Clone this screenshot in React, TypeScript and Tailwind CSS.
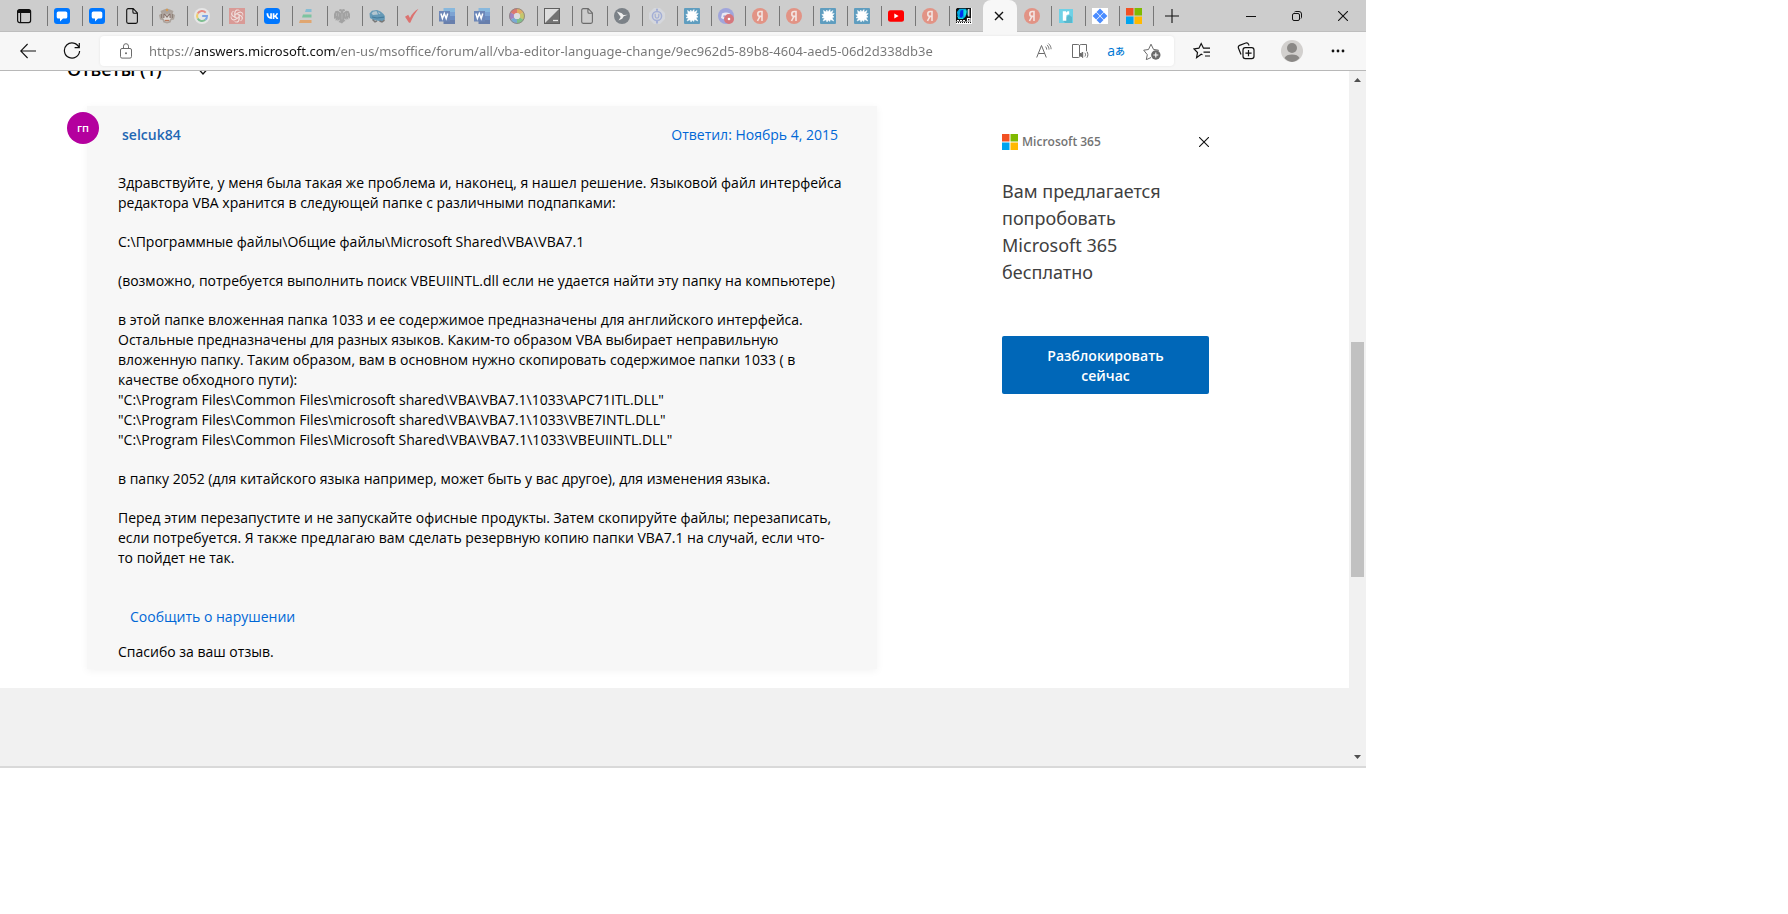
import type { ReactNode } from "react";

const uiFont = "font-['Open_Sans','Noto_Sans',sans-serif]";
const wideFont = "font-['Noto_Sans','Open_Sans',sans-serif]";

function Icon({ children, label }: { children: ReactNode; label?: string }) {
  return (
    <svg width="16" height="16" viewBox="0 0 16 16" fill="none" role="img" aria-label={label} className="block shrink-0">
      {children}
    </svg>
  );
}

const ChatIcon = () => (
  <Icon label="Chat">
    <rect width="16" height="16" rx="3" fill="#0077ff" />
    <path d="M4.4 3.4h7.2a1.700 1.700 0 0 1 1.700 1.700v3.800a1.700 1.700 0 0 1-1.700 1.700H9L6 13.400v-2.800H4.400a1.700 1.700 0 0 1-1.700-1.700V5.100a1.700 1.700 0 0 1 1.700-1.700z" fill="#fff" />
  </Icon>
);

const PageIcon = ({ color }: { color: string }) => (
  <Icon label="Page">
    <path d="M2.7 2.2C2.7 1.2 3.3.6 4.2.6h5l4.2 4.3v8.9c0 1-.6 1.6-1.5 1.6H4.2c-.9 0-1.5-.6-1.5-1.6zM8.9.8v3.1c0 .9.5 1.3 1.3 1.3h3" stroke={color} strokeWidth="1.1" />
  </Icon>
);

const EmblemIcon = () => (
  <Icon label="Emblem">
    <path d="M1.500 3L5 1.500 8 .5l3 1L14.500 3l-1 2.500L16 7l-1 4.500-2.500.5-1 2.500L8 15.500l-3.500-1-1-2.500L1 11.500 0 7l2.500-1.500z" fill="#aca39c" />
    <path d="M4.800 4.500L8 7l3.200-2.500.8 5.500-2.500 3.500h-3L4 10z" fill="#dedad6" />
    <path d="M5 5.500L4.800 10M5.200 5.500L8 9l2.800-3.500M11 5.500l.2 4.500" stroke="#85716a" strokeWidth="1.200" />
    <path d="M6 12.500h4" stroke="#b9785c" strokeWidth="1.300" />
    <path d="M2.500 6v4M13.500 6v4" stroke="#8d8078" />
    <circle cx="8" cy="2" r="1.200" fill="#d69a52" />
  </Icon>
);

const GoogleIcon = () => (
  <Icon label="Google">
    <circle cx="8" cy="8" r="8" fill="#e6e6e6" />
    <path d="M11.700 4.600A5 5 0 0 0 3.700 5.600" stroke="#e88a82" strokeWidth="2" />
    <path d="M3.700 5.600a5 5 0 0 0 0 4.800" stroke="#f0cf6c" strokeWidth="2" />
    <path d="M3.700 10.400a5 5 0 0 0 7.600 1.400" stroke="#7fbf91" strokeWidth="2" />
    <path d="M11.300 11.800C12.500 10.800 13 9.500 13 8H8.200" stroke="#7fa5e6" strokeWidth="2" />
  </Icon>
);

const KnotIcon = () => (
  <Icon label="ChatGPT">
    <rect width="16" height="16" fill="#d99a96" />
    <g stroke="#efdcda" strokeWidth=".9">
      {[0, 60, 120, 180, 240, 300].map((a) => (
        <path key={a} transform={`rotate(${a} 8 8)`} d="M5.900 9.200V4.600A2.700 2.700 0 0 1 10.500 2.700M5.900 6.800L9.900 4.500a2.700 2.700 0 0 1 3.400.6" />
      ))}
    </g>
  </Icon>
);

const VkIcon = () => (
  <Icon label="VK">
    <rect width="16" height="16" rx="3.500" fill="#0077ff" />
    <path d="M2.500 5.200h1.800c.1 2.400 1 3.400 1.900 3.700V5.200h1.700v5.700C4.500 11 2.600 8.800 2.500 5.200zM8.700 5.200h1.700v2.200c1-.2 1.600-1 2-2.200H14c-.3 1.300-1 2.200-1.900 2.700 1 .5 1.700 1.500 2.200 3h-1.900c-.3-1-1-1.800-2-2v2H8.700z" fill="#fff" />
  </Icon>
);

const BarsIcon = () => (
  <Icon label="Bars">
    <path d="M7 1h5.500v3H6z" fill="#86bdd4" />
    <path d="M4 6.500h8.500V9.500H3z" fill="#7cc4a0" />
    <path d="M1 12h11.500v3H0z" fill="#e0a670" />
  </Icon>
);

const EagleIcon = () => (
  <Icon label="Eagle">
    <path d="M6.700 3.200L5 3l.4-1.800L7.400 1 8 2.500 8.600 1l2 .2L11 3l-1.700.2V5L12 2.800 14.500 3 16 6v5l-1.500-2-.3 3-1.500-1.800-.4 2-1.500-1.700-.8.500 1.500 2-1.500.5L8 15.600 6 14.500 4.500 14 6 12l-.8-.5-1.500 1.700-.4-2L1.800 13l-.3-3L0 11V6l1.500-3L4 2.800 6.700 5z" fill="#a2a2a2" />
    <path d="M2.500 5v3M4.500 5.500v3M11.500 5.500v3M13.500 5v3M8 5.500v6" stroke="#b8b8b8" strokeWidth=".8" />
  </Icon>
);

const CarIcon = () => (
  <Icon label="Car">
    <path d="M.5 5.500L3 2.800l5-.8 3.500 1.500L14.500 6l1.300 2v3.500l-2.500 1.800-3.300-.3-5.500-1L1 10z" fill="#6599b6" />
    <path d="M2.500 5.500l1.500-1.800 3.500-.6L9 6.500 4 7zM9 3.500l2.500 2-1.500.8z" fill="#b4c6d0" />
    <path d="M3 9l5 1 7-.8" stroke="#457c9c" strokeWidth="1.200" />
    <path d="M3.500 11.500L6 13.800l2-1M10.500 13l2.500 1 2.500-1.800" stroke="#777" strokeWidth="1.500" />
  </Icon>
);

const CheckIcon = () => (
  <Icon label="Check">
    <path d="M1 8.800l3.200-2L6 9.900C7.800 6 10.600 2.900 14.500.8 11.200 4.900 8.500 9.500 6.300 14.800H5z" fill="#dc7370" />
  </Icon>
);

const WordIcon = () => (
  <Icon label="Word">
    <path d="M4.500 0H16v4H4.500z" fill="#88b8dd" />
    <path d="M4.500 4H16v4H4.500z" fill="#7da3d3" />
    <path d="M4.500 8H16v4H4.500z" fill="#6a8cc2" />
    <path d="M4.500 12H16v4H4.500z" fill="#687fac" />
    <rect y="3" width="11" height="10.500" fill="#6d87b8" />
    <path d="M1.900 5.500l1.500 5 1.900-5 1.900 5 1.500-5" stroke="#fff" strokeWidth="1.500" />
  </Icon>
);

const WheelIcon = () => (
  <Icon label="Colour wheel">
    <g strokeWidth="4.600">
      <path d="M8 2.600A5.400 5.400 0 0 1 12.700 5.300" stroke="#e0ae64" />
      <path d="M12.700 5.300a5.400 5.400 0 0 1 0 5.400" stroke="#c5c76a" />
      <path d="M12.700 10.700A5.400 5.400 0 0 1 8 13.400" stroke="#7fc08a" />
      <path d="M8 13.400a5.400 5.400 0 0 1-4.700-2.700" stroke="#7aa9d2" />
      <path d="M3.300 10.700a5.400 5.400 0 0 1 0-5.400" stroke="#a382c0" />
      <path d="M3.300 5.300A5.400 5.400 0 0 1 8 2.600" stroke="#db7870" />
    </g>
    <circle cx="8" cy="8" r="3.100" fill="#ddd" />
    <circle cx="8" cy="8" r="7.500" stroke="#8d8581" strokeWidth=".9" />
  </Icon>
);

const ExposureIcon = () => (
  <Icon label="Exposure">
    <rect x=".5" y=".5" width="15" height="15" fill="#737373" stroke="#5f5f5f" />
    <path d="M1 1h14L1 15z" fill="#dedede" />
    <path d="M9 12.500h5" stroke="#e8e8e8" strokeWidth="1.300" />
  </Icon>
);

const BirdIcon = () => (
  <Icon label="Bird">
    <circle cx="8" cy="8" r="8" fill="#7b8187" />
    <path d="M2.800 3.500l5 1.700L9.500 7l4.200-.2-4 1.500-1.500 2.500-3.700 1.700L6.700 9z" fill="#eee" />
  </Icon>
);

const UnitIcon = () => (
  <Icon label="Unit">
    <path d="M5 0h6l5 5v6l-5 5H5l-5-5V5z" fill="#d5d7dc" />
    <path d="M8 .8v2M8 13v2.500" stroke="#a4afd6" strokeWidth="2" />
    <circle cx="8" cy="8" r="4.600" stroke="#a4afd6" strokeWidth="1.500" />
    <path d="M6.200 5.800v2.500a1.800 1.800 0 0 0 3.600 0V5.800" stroke="#a4afd6" strokeWidth="1.200" />
  </Icon>
);

const SplatIcon = () => (
  <Icon label="Splat">
    <rect width="16" height="16" rx="1" fill="#5f9dbf" />
    <path d="M3.500 2.500L6 4l.7-2L8 3.800 10 1.500l.2 2.800L13 2.500l-1.300 3.200 2.500-.2-1.700 2L14 9l-2 .8 1.800 3.200-3.300-1.500-.8 2L8.300 12 7 14l-.9-2.300L3 13l1.500-3L2 9.800l1.700-1.600L1.800 6.500 4.200 6z" fill="#fff" stroke="#fff" strokeWidth=".5" strokeLinejoin="round" />
  </Icon>
);

const DiscordIcon = () => (
  <Icon label="Discord">
    <circle cx="8" cy="8" r="8" fill="#a0a5dc" />
    <path d="M4 5.500c2.500-1.300 5.500-1.300 8 0l1 4.500-2.500 1.300-1-1.300h-3l-1 1.300L3 10z" fill="#e9e9f3" />
    <circle cx="6.200" cy="8.200" r="1" fill="#a0a5dc" />
    <circle cx="11" cy="11" r="5" fill="#d6777d" />
    <circle cx="11" cy="11" r="1.300" fill="#fff" />
  </Icon>
);

const YandexIcon = () => (
  <Icon label="Yandex">
    <circle cx="8" cy="8" r="8" fill="#e29385" />
    <path d="M10 13V3.500H8.300C6.600 3.500 5.800 4.700 5.800 6c0 1.400.8 2.400 2.300 2.400H10M7.900 8.400L5.500 13" stroke="#f3e4e1" strokeWidth="1.600" />
  </Icon>
);

const YoutubeIcon = () => (
  <Icon label="YouTube">
    <rect y="2.200" width="16" height="11.600" rx="2.500" fill="#f00" />
    <path d="M6.300 5.600v4.800L10.600 8z" fill="#fff" />
  </Icon>
);

const ScreenIcon = () => (
  <Icon label="Computer">
    <rect width="16" height="16" fill="#fff" />
    <path d="M1 0h14v13.500H0V1z" fill="#111" />
    <path d="M1 4L3.500.7H10l1 3-1.500 5L7 11H2z" fill="#00a8e0" />
    <path d="M4.500 2.500L7 2v6l-2 2-1.500-2z" fill="#0030f0" />
    <path d="M8.200 1.500l1.800 1v4L8.200 9z" fill="#18e6e0" />
    <path d="M1.500 8.500l2 2H7" stroke="#20e0d8" />
    <path d="M12.800 1v7.500M11.500 10.500h2.500v2.500h-2.500z" stroke="#fff" strokeWidth="1.200" />
    <path d="M1 12.500h8" stroke="#fff" strokeDasharray="2 1" />
    <path d="M11.300 1.500v6" stroke="#2cc" strokeWidth=".8" />
    <path d="M0 14.500h15" stroke="#111" strokeDasharray="1 1" />
  </Icon>
);

const LetterIcon = () => (
  <Icon label="Reader">
    <path d="M1 1h14v14H1z" fill="#6fd1e6" />
    <path d="M11 7l3 2v6H7l-2-2.500z" fill="#59b9ce" />
    <path d="M4.800 3.200H8v1.500c.8-1.200 1.700-1.600 3.200-1.500v3.300C9 6.300 8.300 7 8.300 8.500v4.200H4.800z" fill="#fff" />
  </Icon>
);

const DiamondIcon = () => (
  <Icon label="Diamonds">
    <rect width="16" height="16" fill="#fff" />
    <path d="M8 .6l3.500 3.500L8 7.600 4.500 4.100zM8 8.400l3.500 3.500L8 15.400l-3.500-3.500zM4.100 4.500L7.600 8l-3.500 3.500L.6 8zM11.900 4.500L15.400 8l-3.500 3.500L8.400 8z" fill="#4a8cff" />
  </Icon>
);

const MicrosoftIcon = () => (
  <Icon label="Microsoft">
    <path d="M0 0h7.500v7.500H0z" fill="#f25022" />
    <path d="M8.500 0H16v7.500H8.500z" fill="#7fba00" />
    <path d="M0 8.500h7.500V16H0z" fill="#00a4ef" />
    <path d="M8.500 8.500H16V16H8.500z" fill="#ffb900" />
  </Icon>
);

const wideTabs: ReactNode[] = [
  <ChatIcon />, <ChatIcon />, <PageIcon color="#111" />, <EmblemIcon />, <GoogleIcon />, <KnotIcon />,
  <VkIcon />, <BarsIcon />, <EagleIcon />, <CarIcon />, <CheckIcon />, <WordIcon />, <WordIcon />,
  <WheelIcon />, <ExposureIcon />, <PageIcon color="#6b6b6b" />, <BirdIcon />, <UnitIcon />,
];
const narrowTabs: ReactNode[] = [
  <SplatIcon />, <DiscordIcon />, <YandexIcon />, <YandexIcon />, <SplatIcon />, <SplatIcon />,
  <YoutubeIcon />, <YandexIcon />, <ScreenIcon />,
];
const lastTabs: ReactNode[] = [<LetterIcon />, <DiamondIcon />, <MicrosoftIcon />];

function Tab({ icon, width, divider = true }: { icon: ReactNode; width: string; divider?: boolean }) {
  return (
    <button type="button" className={`flex h-5 shrink-0 items-center border-l pl-1.5 ${width} ${divider ? "border-[#777]" : "border-transparent"}`}>
      {icon}
    </button>
  );
}

function TabStrip() {
  return (
    <header className="flex h-8 items-center border-b border-[#bebebe] bg-[#cdcdcd]">
      <button type="button" aria-label="Tab actions" className="flex w-[47px] shrink-0 justify-center">
        <Icon>
          <rect x="1.600" y="1.600" width="13" height="13" rx="2" stroke="#111" strokeWidth="1.200" />
          <path d="M1.500 3.600a2 2 0 0 1 2-2h9a2 2 0 0 1 2 2V5h-13z" fill="#111" />
          <path d="M4.600 5v9.500" stroke="#111" strokeWidth="1.100" />
        </Icon>
      </button>
      {wideTabs.map((icon, i) => <Tab key={i} icon={icon} width="w-[35px]" />)}
      {narrowTabs.map((icon, i) => <Tab key={i} icon={icon} width="w-[34px]" />)}
      <div className="-mb-px flex h-8 w-[34px] shrink-0 items-center justify-center rounded-t-lg bg-[#f7f7f7] pr-0.5">
        <button type="button" aria-label="Close tab" className="flex">
          <svg width="10" height="10" viewBox="0 0 10 10"><path d="M1 1l8 8M9 1L1 9" stroke="#111" strokeWidth="1.400" /></svg>
        </button>
      </div>
      <Tab icon={<YandexIcon />} width="w-[34px]" divider={false} />
      {lastTabs.map((icon, i) => <Tab key={i} icon={icon} width="w-[34px]" />)}
      <button type="button" aria-label="New tab" className="flex h-5 w-9 shrink-0 items-center justify-center border-l border-[#777]">
        <svg width="14" height="14" viewBox="0 0 14 14"><path d="M7 0v14M0 7h14" stroke="#111" strokeWidth="1.100" /></svg>
      </button>
      <div className="ml-auto flex">
        <button type="button" aria-label="Minimize" className="flex w-[46px] justify-center">
          <svg width="10" height="10" viewBox="0 0 10 10"><path d="M0 5.500h10" stroke="#111" /></svg>
        </button>
        <button type="button" aria-label="Restore" className="flex w-[46px] justify-center">
          <svg width="10" height="10" viewBox="0 0 10 10" fill="none"><rect x=".5" y="2.500" width="7" height="7" rx="1.500" stroke="#111" /><path d="M2.500 1A1.500 1.500 0 0 1 3.500.5H7A2.500 2.500 0 0 1 9.500 3v3.500a1.500 1.500 0 0 1-.6 1" stroke="#111" /></svg>
        </button>
        <button type="button" aria-label="Close" className="flex w-[46px] justify-center">
          <svg width="10" height="10" viewBox="0 0 10 10"><path d="M0 0l10 10M10 0L0 10" stroke="#111" strokeWidth="1.100" /></svg>
        </button>
      </div>
    </header>
  );
}

const toolButton = "flex shrink-0 items-center justify-center";

function Toolbar() {
  return (
    <div className="flex h-[39px] items-center border-b border-[#b8b8b8] bg-[#f7f7f7] pl-3 pr-1.5">
      <button type="button" aria-label="Back" className={`${toolButton} w-8`}>
        <svg width="16" height="16" viewBox="0 0 16 16" fill="none"><path d="M16 8H.8M7.600 1L.7 8l6.900 7" stroke="#111" strokeWidth="1.100" /></svg>
      </button>
      <button type="button" aria-label="Refresh" className={`${toolButton} ml-3 w-8`}>
        <svg width="18" height="18" viewBox="0 0 18 18" fill="none"><path d="M16 5.500A7.600 7.600 0 1 0 16.600 9M16.300 1v4.700h-4.700" stroke="#111" strokeWidth="1.200" /></svg>
      </button>
      <div className="ml-3 flex h-[30px] min-w-0 flex-1 items-center rounded bg-white pl-2.5 pr-1 shadow-[0_0_3px_rgba(0,0,0,0.08)]">
        <button type="button" aria-label="Site information" className={`${toolButton} w-8`}>
          <svg width="14" height="16" viewBox="0 0 14 16" fill="none"><rect x="1.500" y="5.500" width="11" height="9.600" rx="1.500" stroke="#6b6b6b" /><path d="M4.500 5.500V3.200a2.500 2.500 0 0 1 5 0v2.300" stroke="#6b6b6b" /><circle cx="7" cy="10.300" r="1" fill="#6b6b6b" /></svg>
        </button>
        <input
          type="text"
          aria-label="Address"
          defaultValue="https://answers.microsoft.com/en-us/msoffice/forum/all/vba-editor-language-change/9ec962d5-89b8-4604-aed5-06d2d338db3e"
          className={`ml-[7px] min-w-0 flex-1 bg-[linear-gradient(to_right,#767676_0_46px,#111_46px_188px,#767676_188px)] bg-clip-text text-[13px] leading-5 text-transparent outline-none ${wideFont}`}
        />
        <button type="button" aria-label="Read aloud" className={`${toolButton} w-9`}>
          <svg width="16" height="16" viewBox="0 0 16 16" fill="none" stroke="#6b6b6b"><path d="M.7 14.500L5.500 2.500l4.800 12M2.400 10.500h6.200" /><path d="M9.500 3.600c.9.900 1.200 1.800 1.200 3M11 1.900c1.400 1.300 2 2.900 2 4.700M12.400.5c1.800 1.600 2.700 3.500 2.700 5.700" strokeWidth=".9" /></svg>
        </button>
        <button type="button" aria-label="Immersive reader" className={`${toolButton} w-9`}>
          <svg width="18" height="16" viewBox="0 0 18 16" fill="none" stroke="#6b6b6b"><path d="M8.500 2.500v11M7.500 14.500h-6v-13h5.300c1 0 1.700.4 1.700 1.300 0-.9.700-1.300 1.700-1.300h5.300V8M8.500 13.500c0 .7-.3 1-1 1" /><path d="M9 10.500h1.200l1.500-1.500v5.600l-1.500-1.500H9z" fill="#6b6b6b" /><path d="M13.900 9.800c.8 1 .8 2.600 0 3.700M15.900 8.600c1.300 1.800 1.300 4.300 0 6.100" /></svg>
        </button>
        <button type="button" aria-label="Translate" className={`${toolButton} w-9 text-[#0078d4]`}>
          <span className="text-sm leading-4">a</span>
          <span className="font-['Noto_Sans_CJK_JP',sans-serif] text-[10px] font-medium leading-4">あ</span>
        </button>
        <button type="button" aria-label="Add to favorites" className={`${toolButton} w-9`}>
          <svg width="18" height="17" viewBox="0 0 18 17" fill="none"><path d="M8 14.500l-4.700 2.200 1-5L.7 7.200 5.500 6.500 8 1.200l2.500 5.200 5 .8-1.300 1.500" stroke="#6b6b6b" /><circle cx="12.800" cy="12" r="4.700" fill="#6b6b6b" /><path d="M12.800 9.500v5M10.300 12h5" stroke="#fff" strokeWidth="1.100" /></svg>
        </button>
      </div>
      <div className="ml-1.5 flex">
        <button type="button" aria-label="Favorites" className={`${toolButton} w-11`}>
          <svg width="18" height="18" viewBox="0 0 18 18" fill="none" stroke="#111" strokeWidth="1.200"><path d="M9.500 12.700l-1.300-.5-4.600 3.500.9-5.200L1 7l4.900-.8L8.200 1.500l2.300 4.700H17M10.500 10.200H17M12 14H17" /></svg>
        </button>
        <button type="button" aria-label="Collections" className={`${toolButton} w-11`}>
          <svg width="18" height="18" viewBox="0 0 18 18" fill="none" stroke="#111" strokeWidth="1.200"><rect x="6" y="5.600" width="11" height="11" rx="2.300" /><path d="M11.500 8v6.200M8.400 11.100h6.200M4 12.500L1.500 6.200c-.5-1.300-.1-2.300 1.100-2.800L8.800 1c1.200-.4 2.200 0 2.700 1.200l.6 1.300" /></svg>
        </button>
        <button type="button" aria-label="Profile" className={`${toolButton} w-12`}>
          <svg width="22" height="22" viewBox="0 0 22 22"><circle cx="11" cy="11" r="11" fill="#d2d0ce" /><circle cx="11" cy="8" r="5" fill="#8a8886" /><path d="M3.500 18c1-2.700 4-3.600 7.500-3.600s6.500.9 7.500 3.600A11 11 0 0 1 11 22a11 11 0 0 1-7.500-4z" fill="#8a8886" /></svg>
        </button>
        <button type="button" aria-label="Settings and more" className={`${toolButton} w-11`}>
          <svg width="14" height="4" viewBox="0 0 14 4" fill="#111"><circle cx="2" cy="2" r="1.400" /><circle cx="7" cy="2" r="1.400" /><circle cx="12" cy="2" r="1.400" /></svg>
        </button>
      </div>
    </div>
  );
}

const paragraphs: string[][] = [
  [
    "Здравствуйте, у меня была такая же проблема и, наконец, я нашел решение. Языковой файл интерфейса",
    "редактора VBA хранится в следующей папке с различными подпапками:",
  ],
  ["C:\\Программные файлы\\Общие файлы\\Microsoft Shared\\VBA\\VBA7.1"],
  ["(возможно, потребуется выполнить поиск VBEUIINTL.dll если не удается найти эту папку на компьютере)"],
  [
    "в этой папке вложенная папка 1033 и ее содержимое предназначены для английского интерфейса.",
    "Остальные предназначены для разных языков. Каким-то образом VBA выбирает неправильную",
    "вложенную папку. Таким образом, вам в основном нужно скопировать содержимое папки 1033 ( в",
    "качестве обходного пути):",
    "\"C:\\Program Files\\Common Files\\microsoft shared\\VBA\\VBA7.1\\1033\\APC71ITL.DLL\"",
    "\"C:\\Program Files\\Common Files\\microsoft shared\\VBA\\VBA7.1\\1033\\VBE7INTL.DLL\"",
    "\"C:\\Program Files\\Common Files\\Microsoft Shared\\VBA\\VBA7.1\\1033\\VBEUIINTL.DLL\"",
  ],
  ["в папку 2052 (для китайского языка например, может быть у вас другое), для изменения языка."],
  [
    "Перед этим перезапустите и не запускайте офисные продукты. Затем скопируйте файлы; перезаписать,",
    "если потребуется. Я также предлагаю вам сделать резервную копию папки VBA7.1 на случай, если что-",
    "то пойдет не так.",
  ],
];

function Answer() {
  return (
    <article className="relative ml-5 bg-[#f7f7f7] pb-[7px] pl-[31px] pr-8 pt-[19px] text-sm leading-5 text-black shadow-[0_2px_8px_rgba(0,0,0,0.05)]">
      <div className="absolute -left-5 top-[6px] flex size-8 items-center justify-center rounded-full bg-[#b4009e] text-[11px] font-semibold text-white">
        гп
      </div>
      <div className="flex justify-between pl-1 pr-[7px]">
        <a href="#profile" className="font-semibold text-[#1f67b3]">selcuk84</a>
        <a href="#answer" className="text-[#0067d6]">Ответил: Ноябрь 4, 2015</a>
      </div>
      <div className="mt-7 flex flex-col gap-[19px] whitespace-nowrap">
        {paragraphs.map((lines, i) => (
          <p key={i}>
            {lines.map((line) => <span key={line} className="block">{line}</span>)}
          </p>
        ))}
      </div>
      <p className="mt-[39px] pl-3"><a href="#report" className="text-[#0067d6]">Сообщить о нарушении</a></p>
      <p className="mt-[15px]">Спасибо за ваш отзыв.</p>
    </article>
  );
}

function Promo() {
  return (
    <aside className="mt-7">
      <div className="flex items-center justify-between">
        <div className="flex items-center gap-1 text-[#737373]">
          <MicrosoftIcon />
          <span className="text-xs font-semibold">Microsoft 365</span>
        </div>
        <button type="button" aria-label="Close offer" className="flex">
          <svg width="10" height="10" viewBox="0 0 10 10"><path d="M0 0l10 10M10 0L0 10" stroke="#111" strokeWidth="1.100" /></svg>
        </button>
      </div>
      <h2 className={`mt-7 text-lg leading-[27px] text-[#404040] ${wideFont}`}>Вам предлагается<br />попробовать<br />Microsoft 365<br />бесплатно</h2>
      <button type="button" className="mt-[50px] w-full rounded-xs bg-[#0067b8] px-8 pb-2 pt-2.5 text-sm font-semibold leading-5 text-white">
        Разблокировать сейчас
      </button>
    </aside>
  );
}

function Scrollbar() {
  return (
    <div className="flex w-[17px] shrink-0 flex-col items-center bg-[#f1f1f1] py-[7px]">
      <svg width="7" height="4" viewBox="0 0 7 4" fill="#505050"><path d="M3.500 0L7 4H0z" /></svg>
      <div className="flex w-[13px] flex-1 flex-col">
        <div className="grow-[260]" />
        <div className="grow-[235] bg-[#c1c1c1]" />
        <div className="grow-[178]" />
      </div>
      <svg width="7" height="4" viewBox="0 0 7 4" fill="#505050"><path d="M3.500 4L7 0H0z" /></svg>
    </div>
  );
}

export default function App() {
  return (
    <div className={`min-h-screen bg-white ${uiFont}`}>
      <div className="w-[76.4%] border-b-2 border-[#d9d9d9]">
        <TabStrip />
        <Toolbar />
        <div className="flex">
          <main className="min-w-0 flex-1 overflow-hidden bg-[#f1f1f1]">
            <div className="bg-white pb-[19px] pl-[67px]">
              <div className="-mt-3.5 flex items-center gap-9 text-lg font-semibold leading-6">
                <h1>Ответы (1)</h1>
                <button type="button" aria-label="Sort answers" className="flex pt-1.5">
                  <svg width="10" height="6" viewBox="0 0 10 6" fill="none"><path d="M1 .5l4 4.500 4-4.500" stroke="#111" strokeWidth="1.300" /></svg>
                </button>
              </div>
              <div className="mt-[25px] grid grid-cols-[810fr_207fr] items-start gap-x-[125px] pr-[140px]">
                <Answer />
                <Promo />
              </div>
            </div>
            <div className="h-[78px]" />
          </main>
          <Scrollbar />
        </div>
      </div>
    </div>
  );
}
